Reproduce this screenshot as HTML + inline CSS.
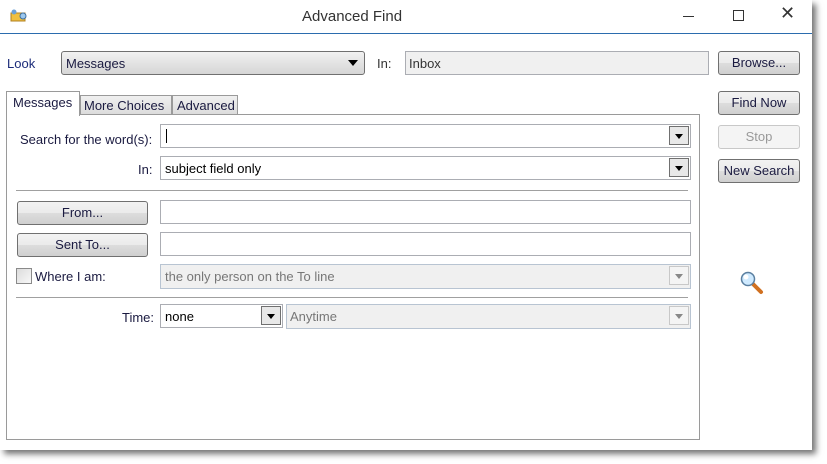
<!DOCTYPE html>
<html><head><style>
*{box-sizing:border-box;margin:0;padding:0}
body{width:827px;height:464px;background:#fff;font-family:"Liberation Sans",sans-serif;font-size:13px;color:#000;position:relative;overflow:hidden}
.win{position:absolute;left:0;top:0;width:812px;height:450px;background:#fff;box-shadow:4px 4px 6px rgba(0,0,0,.55)}
.a{position:absolute}
.btn{position:absolute;border:1px solid #707070;border-radius:3px;background:linear-gradient(#f2f2f2,#ebebeb 50%,#dddddd 51%,#cfcfcf);text-align:center;line-height:22px;color:#1a1a40}
.inp{position:absolute;border:1px solid #abadb3;background:#fff}
.dis{background:#f0f0f0;border-color:#b8c4d2}
.arr{position:absolute;right:1px;top:1px;width:20px;height:19px;border:1px solid #707070;background:#e8e8e8}
.arr:after{content:"";position:absolute;left:5px;top:7px;border-left:4.5px solid transparent;border-right:4.5px solid transparent;border-top:5px solid #000}
.arr.d{border-color:#c8c8c8;background:#f4f4f4}
.arr.d:after{border-top-color:#888}
.t{position:absolute;white-space:nowrap}
</style></head><body>
<div class="win">
 <svg class="a" style="left:9px;top:8px" width="20" height="16"><rect x="2" y="5" width="14" height="8" fill="#f0c040" stroke="#b08020"/><circle cx="5" cy="4" r="2.5" fill="#6aa0d8"/><circle cx="14" cy="8" r="3" fill="#9cc8ee" stroke="#4070a0"/></svg>
 <div class="t" style="left:302px;top:8px;font-size:15px;color:#333">Advanced Find</div>
 <div class="a" style="left:683px;top:16px;width:11px;border-top:1px solid #333"></div>
 <div class="a" style="left:733px;top:10px;width:11px;height:11px;border:1px solid #333"></div>
 <div class="t" style="left:780px;top:3px;font-size:18px;color:#333">✕</div>
 <div class="a" style="left:0;top:33px;width:812px;border-top:1px solid #2b6cae"></div>

 <div class="t" style="left:7px;top:56px;color:#1c2c7a">Look</div>
 <div class="inp" style="left:61px;top:51px;width:304px;height:24px;border-color:#707070;border-radius:3px;background:linear-gradient(#f2f2f2,#e3e3e3 50%,#d6d6d6)"><span class="t" style="left:4px;top:4px;color:#1a1a40">Messages</span><span class="a" style="right:6px;top:8px;border-left:5px solid transparent;border-right:5px solid transparent;border-top:6px solid #000"></span></div>
 <div class="t" style="left:377px;top:56px;color:#333">In:</div>
 <div class="inp" style="left:405px;top:51px;width:304px;height:24px;background:#f0f0f0"><span class="t" style="left:3px;top:4px;color:#333">Inbox</span></div>
 <div class="btn" style="left:718px;top:51px;width:82px;height:24px">Browse...</div>
 <div class="btn" style="left:718px;top:91px;width:82px;height:24px">Find Now</div>
 <div class="btn" style="left:718px;top:125px;width:82px;height:24px;border-color:#c8c8c8;background:#f4f4f4;color:#999">Stop</div>
 <div class="btn" style="left:718px;top:159px;width:82px;height:24px">New Search</div>
 <svg class="a" style="left:739px;top:270px" width="28" height="28"><line x1="13" y1="13" x2="22" y2="22" stroke="#d07020" stroke-width="4" stroke-linecap="round"/><circle cx="9" cy="9" r="6.5" fill="#cfeaff" stroke="#5a7fa0" stroke-width="1.5"/><circle cx="7" cy="7" r="2.5" fill="#fff"/></svg>

 <div class="a" style="left:6px;top:114px;width:694px;height:326px;border:1px solid #9a9a9a"></div>
 <div class="a" style="left:80px;top:95px;width:92px;height:20px;border:1px solid #9a9a9a;background:linear-gradient(#f0f0f0,#dcdcdc)"></div>
 <div class="t" style="left:84px;top:98px;color:#1a1a40">More Choices</div>
 <div class="a" style="left:172px;top:95px;width:66px;height:20px;border:1px solid #9a9a9a;background:linear-gradient(#f0f0f0,#dcdcdc)"></div>
 <div class="t" style="left:177px;top:98px;color:#1a1a40">Advanced</div>
 <div class="a" style="left:6px;top:91px;width:74px;height:25px;border:1px solid #9a9a9a;border-bottom:none;background:#fff"></div>
 <div class="t" style="left:13px;top:95px;color:#1a1a40">Messages</div>

 <div class="t" style="left:20px;top:132px;color:#1a1a40">Search for the word(s):</div>
 <div class="inp" style="left:160px;top:124px;width:531px;height:24px"><span class="a" style="left:5px;top:4px;height:14px;border-left:1px solid #000"></span><div class="arr"></div></div>
 <div class="t" style="left:138px;top:162px;color:#1a1a40">In:</div>
 <div class="inp" style="left:160px;top:156px;width:531px;height:24px"><span class="t" style="left:4px;top:4px">subject field only</span><div class="arr"></div></div>
 <div class="a" style="left:16px;top:190px;width:672px;border-top:1px solid #a0a0a0"></div>
 <div class="btn" style="left:17px;top:201px;width:131px;height:24px">From...</div>
 <div class="inp" style="left:160px;top:200px;width:531px;height:24px"></div>
 <div class="btn" style="left:17px;top:233px;width:131px;height:24px">Sent To...</div>
 <div class="inp" style="left:160px;top:232px;width:531px;height:24px"></div>
 <div class="a" style="left:16px;top:268px;width:16px;height:16px;border:1px solid #8a8a8a;background:linear-gradient(135deg,#dcdcdc,#f8f8f8)"></div>
 <div class="t" style="left:35px;top:269px;color:#1a1a40">Where I am:</div>
 <div class="inp dis" style="left:160px;top:264px;width:531px;height:25px"><span class="t" style="left:4px;top:4px;color:#777">the only person on the To line</span><div class="arr d"></div></div>
 <div class="a" style="left:16px;top:297px;width:672px;border-top:1px solid #a0a0a0"></div>
 <div class="t" style="left:122px;top:310px;color:#1a1a40">Time:</div>
 <div class="inp" style="left:160px;top:304px;width:123px;height:24px"><span class="t" style="left:4px;top:4px">none</span><div class="arr"></div></div>
 <div class="inp dis" style="left:286px;top:304px;width:405px;height:25px"><span class="t" style="left:3px;top:4px;color:#777">Anytime</span><div class="arr d"></div></div>
</div>
</body></html>
